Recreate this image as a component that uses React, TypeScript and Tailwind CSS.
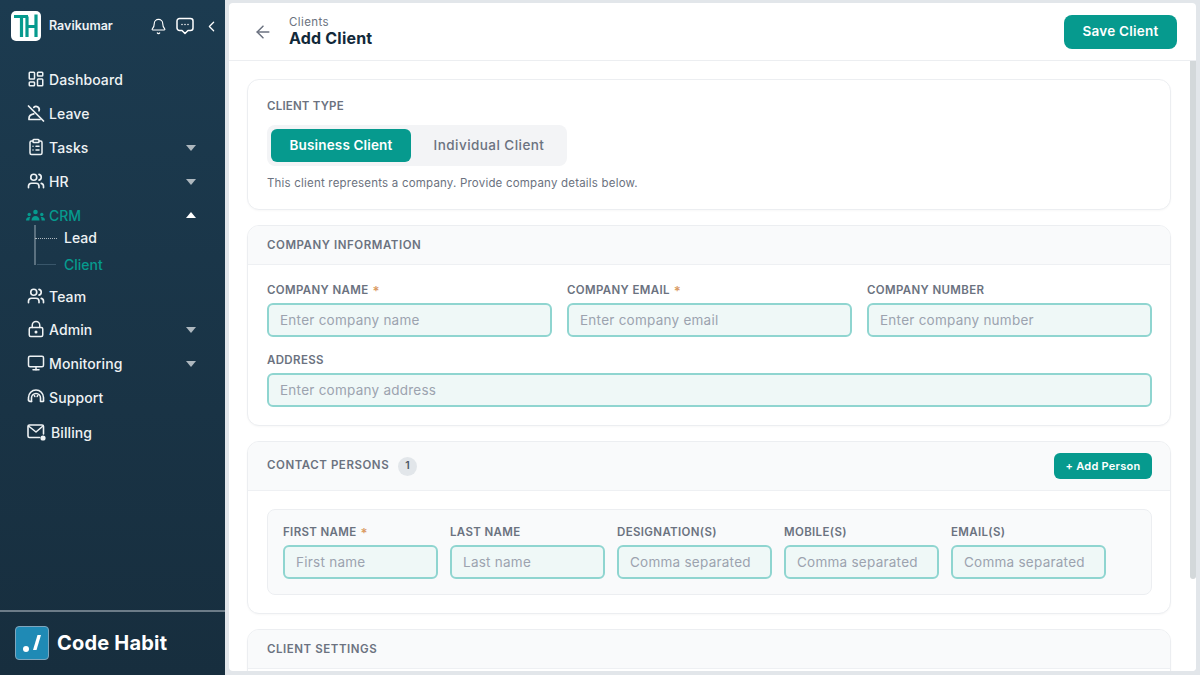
import React from 'react';
import { ArrowLeft, Bell, ChevronLeft, ClipboardList, LayoutDashboard, LockKeyhole, Monitor, Users } from 'lucide-react';

const LeaveIcon = () => (
  <svg width="18" height="18" viewBox="0 0 18 18" fill="none" stroke="currentColor" strokeWidth="1.700" strokeLinecap="round" strokeLinejoin="round">
    <path d="M1.500 2 16.500 17" />
    <path d="M6.800 3.300A3.200 3.200 0 0 1 12 6.800" />
    <path d="M6.800 9.800c-2.800.5-4.800 2-4.800 4.500v1.200h11" />
  </svg>
);

const CrmIcon = () => (
  <svg width="19" height="12" viewBox="0 0 19 12" fill="currentColor">
    <circle cx="9.500" cy="3" r="2.300" />
    <path d="M5.500 11.500c0-3 1.800-4.500 4-4.500s4 1.500 4 4.500z" />
    <circle cx="3.200" cy="5.500" r="1.700" />
    <circle cx="15.800" cy="5.500" r="1.700" />
    <path d="M0 11.500c0-2.500 1.400-3.800 4.300-3.500-.6 1-.9 2.100-.9 3.500zM19 11.500c0-2.500-1.400-3.800-4.300-3.500.6 1 .9 2.100.9 3.500z" />
  </svg>
);

const SupportIcon = () => (
  <svg width="18" height="18" viewBox="0 0 18 18" fill="none" stroke="currentColor" strokeWidth="1.600" strokeLinecap="round" strokeLinejoin="round">
    <path d="M1.500 12V9.500a7.500 7.500 0 0 1 15 0V13" />
    <path d="M4.500 13.500V10a4.500 4.500 0 0 1 9 0v3.500h2.500a1 1 0 0 0 .5-.5" />
    <path d="M1.500 12c0 1 .9 1.500 3 1.500" />
    <path d="M7.300 7.500 7.800 8.500M10.700 7.500 10.200 8.500" />
  </svg>
);

const BillingIcon = () => (
  <svg width="20" height="17" viewBox="0 0 20 17" fill="none" stroke="currentColor" strokeWidth="1.600" strokeLinecap="round" strokeLinejoin="round">
    <path d="M12.500 13.500H2.500A1.500 1.500 0 0 1 1 12V2.500A1.500 1.500 0 0 1 2.500 1h12.500A1.500 1.500 0 0 1 16.500 2.500V10" />
    <path d="m1.500 2 7.500 6 7-6" />
    <circle cx="16" cy="14" r="1.800" fill="currentColor" />
  </svg>
);

const ChatIcon = () => (
  <svg width="18" height="18" viewBox="0 0 18 18" fill="none" stroke="currentColor" strokeWidth="1.500" strokeLinecap="round" strokeLinejoin="round">
    <path d="M3.500 1.500h11a2.500 2.500 0 0 1 2.500 2.500v7a2.500 2.500 0 0 1-2.500 2.500H12L9 16.500 6 13.500H3.500A2.500 2.500 0 0 1 1 11V4a2.500 2.500 0 0 1 2.500-2.500z" />
    <path d="M6 7.500h.01M9 7.500h.01M12 7.500h.01" />
  </svg>
);

const Caret = ({ up = false }: { up?: boolean }) => (
  <svg width="10" height="6" viewBox="0 0 10 6" className={up ? 'text-white' : 'mt-[2px] text-[#aeb8bf]'} fill="currentColor">
    <path d={up ? 'M5 0 10 6H0z' : 'M0 0h10L5 6z'} />
  </svg>
);

const NavItem = ({
  icon,
  label,
  caret,
  className = 'h-[34px]',
  labelClassName = ''
}: {
  icon: React.ReactNode;
  label: string;
  caret?: boolean;
  className?: string;
  labelClassName?: string;
}) => (
  <div className={`flex items-center pr-[29px] pl-[27px] ${className}`}>
    <span className="flex w-[22px] shrink-0 items-center">{icon}</span>
    <span className={`flex-1 text-[14px] font-medium tracking-[0.1px] text-[#eef2f4] ${labelClassName}`}>{label}</span>
    {caret && <Caret />}
  </div>
);

const Sidebar = () => (
  <aside className="flex h-full w-[225px] shrink-0 flex-col bg-gradient-to-b from-[#1c3b50] to-[#172e3e]">
    <div className="flex h-[62px] shrink-0 items-center pb-[10px] pl-[11px]">
      <div className="flex h-[30px] w-[30px] items-center justify-center rounded-[5px] bg-white">
        <svg width="30" height="30" viewBox="0 0 30 30" fill="none" stroke="#069a8e" strokeWidth="3.200">
          <path d="M3 5.500h14M10.500 5.500V26M16 5.500V26M16 15.500h9M25 3.500V26" />
        </svg>
      </div>
      <span className="ml-[8px] text-[12.500px] font-semibold text-[#eef2f4]">Ravikumar</span>
      <div className="ml-[37px] flex items-center gap-[9px] text-white">
        <Bell size={17} strokeWidth={1.600} />
        <ChatIcon />
        <ChevronLeft size={17} strokeWidth={1.800} />
      </div>
    </div>
    <nav className="flex flex-1 flex-col text-[#eef2f4]">
      <NavItem icon={<LayoutDashboard size={18} strokeWidth={2} />} label="Dashboard" />
      <NavItem icon={<LeaveIcon />} label="Leave" />
      <NavItem icon={<ClipboardList size={18} strokeWidth={2} />} label="Tasks" caret />
      <NavItem icon={<Users size={18} strokeWidth={2.200} />} label="HR" caret />
      <div className="flex h-[34px] items-center pr-[29px] pl-[26px]">
        <span className="flex w-[23px] shrink-0 items-center text-[#069a8e]">
          <CrmIcon />
        </span>
        <span className="flex-1 text-[14px] font-medium text-[#069a8e]">CRM</span>
        <Caret up />
      </div>
      <div className="relative -mt-[9px] h-[52px] pl-[64px]">
        <span className="absolute top-[2px] left-[34px] h-[40px] w-[2px] bg-[#5b7180]" />
        <span className="absolute top-[15px] left-[35px] h-px w-[22px] border-t border-dotted border-[#aeb8bf]" />
        <span className="absolute top-[41px] left-[37px] h-px w-[19px] bg-[#39566a]" />
        <div className="flex h-[27px] items-center pt-[2px] text-[14px] font-medium text-[#eef2f4]">Lead</div>
        <div className="flex h-[27px] items-center pt-[2px] text-[14px] font-medium text-[#069a8e]">Client</div>
      </div>
      <div className="h-[4px]" />
      <NavItem icon={<Users size={18} strokeWidth={2.200} />} label="Team" className="h-[33px] pt-[1px]" />
      <NavItem icon={<LockKeyhole size={18} strokeWidth={2} />} label="Admin" caret />
      <NavItem icon={<Monitor size={18} strokeWidth={2} />} label="Monitoring" caret />
      <NavItem icon={<SupportIcon />} label="Support" />
      <NavItem icon={<BillingIcon />} label="Billing" className="h-[34px] pt-[2px]" labelClassName="pl-[2px]" />
    </nav>
    <div className="flex h-[65px] shrink-0 items-center border-t-2 border-[#6c7c88] pb-[2px] pl-[15px]">
      <div className="flex h-[34px] w-[34px] items-center justify-center rounded-[4px] border border-[#7fa6bd] bg-[#1f8ab5]">
        <svg width="22" height="20" viewBox="0 0 22 20" fill="white">
          <circle cx="5" cy="16" r="3" />
          <path d="M12 17 16.500 2h3.500l-4.500 15z" />
        </svg>
      </div>
      <span className="ml-[8px] text-[20px] font-bold tracking-[0.2px] text-white">Code Habit</span>
    </div>
  </aside>
);

const Req = () => <span className="ml-[4px] text-[13px] leading-none text-[#d99a62]">*</span>;

const Field = ({
  label,
  placeholder,
  required,
  className = ''
}: {
  label: string;
  placeholder: string;
  required?: boolean;
  className?: string;
}) => (
  <div className={className}>
    <div className="mb-[4px] flex h-[16px] items-center text-[11.500px] font-semibold tracking-[0.35px] text-[#6b7280]">
      {label}
      {required && <Req />}
    </div>
    <div className="flex h-[34px] items-center rounded-[6px] border-2 border-[#8fd5d0] bg-[#eff8f7] pl-[11px] text-[13.500px] tracking-[0.25px] whitespace-nowrap text-[#9ca3af]">
      {placeholder}
    </div>
  </div>
);

const SectionHead = ({ children, className = 'h-[39px] pt-[2px]' }: { children: React.ReactNode; className?: string }) => (
  <div className={`flex items-center border-b border-[#eef0f3] bg-[#f9fafb] px-[19px] text-[11.500px] font-semibold tracking-[0.55px] text-[#6b7280] ${className}`}>
    {children}
  </div>
);

const Card = ({ children, className = '' }: { children: React.ReactNode; className?: string }) => (
  <section className={`shrink-0 overflow-hidden rounded-[12px] border border-[#eceef1] bg-white shadow-[0_1px_2px_rgba(0,0,0,0.03)] ${className}`}>
    {children}
  </section>
);

const App = () => (
  <div className="flex h-[675px] w-[1200px] overflow-hidden bg-[#e2e6ea] font-['Inter',sans-serif]">
    <Sidebar />
    <main className="mt-[3px] mr-[4px] mb-[4px] ml-[4px] flex min-w-0 flex-1 flex-col overflow-hidden rounded-[4px] bg-white">
      <header className="flex h-[58px] shrink-0 items-center border-b border-[#eceef1] pr-[19px] pl-[24px]">
        <ArrowLeft size={20} strokeWidth={1.800} className="text-[#6b7280]" />
        <div className="ml-[16px] flex-1">
          <div className="text-[11.500px] leading-[14px] tracking-[0.4px] text-[#6b7280]">Clients</div>
          <div className="mb-[1px] text-[16px] leading-[19px] font-bold tracking-[0.2px] text-[#12293a]">Add Client</div>
        </div>
        <button className="h-[34px] w-[113px] rounded-[8px] bg-[#069a8e] text-[13.500px] font-semibold tracking-[0.25px] text-white">
          Save Client
        </button>
      </header>
      <div className="flex min-h-0 flex-1">
        <div className="flex min-w-0 flex-1 flex-col gap-[15px] overflow-hidden pt-[18px] pr-[19px] pl-[18px]">
          <Card className="h-[131px] px-[19px] pt-[18px]">
            <div className="text-[11.500px] leading-[16px] font-semibold tracking-[0.2px] text-[#6b7280]">CLIENT TYPE</div>
            <div className="mt-[11px] flex h-[41px] w-[300px] items-center rounded-[8px] bg-[#f3f4f6] pl-[4px]">
              <div className="flex h-[33px] w-[140px] items-center justify-center rounded-[6px] bg-[#069a8e] text-[13.500px] font-semibold tracking-[0.15px] text-white">
                Business Client
              </div>
              <div className="w-[156px] text-center text-[13.500px] font-medium tracking-[0.45px] text-[#6b7280]">Individual Client</div>
            </div>
            <p className="mt-[9px] text-[11.500px] leading-[16px] tracking-[0.2px] text-[#6b7280]">
              This client represents a company. Provide company details below.
            </p>
          </Card>
          <Card className="h-[201px]">
            <SectionHead>COMPANY INFORMATION</SectionHead>
            <div className="grid grid-cols-[285px_285px_285px] gap-x-[15px] gap-y-[16px] pt-[18px] pl-[19px]">
              <Field label="COMPANY NAME" placeholder="Enter company name" required />
              <Field label="COMPANY EMAIL" placeholder="Enter company email" required />
              <Field label="COMPANY NUMBER" placeholder="Enter company number" />
              <Field label="ADDRESS" placeholder="Enter company address" className="col-span-3" />
            </div>
          </Card>
          <Card className="h-[173px]">
            <SectionHead className="h-[49px] justify-between pr-[18px]">
              <span className="flex items-center">
                CONTACT PERSONS
                <span className="ml-[9px] flex h-[19px] w-[19px] items-center justify-center rounded-full bg-[#e2e6ea] text-[10.500px] text-[#4b5563]">
                  1
                </span>
              </span>
              <button className="h-[26px] w-[98px] rounded-[6px] bg-[#069a8e] text-[11px] font-semibold tracking-[0.25px] text-white">
                + Add Person
              </button>
            </SectionHead>
            <div className="pt-[18px] pr-[18px] pl-[19px]">
              <div className="grid h-[86px] grid-cols-[155px_155px_155px_155px_155px] gap-x-[12px] rounded-[8px] border border-[#eceef1] bg-[#f9fafb] pt-[15px] pl-[15px]">
                <Field label="FIRST NAME" placeholder="First name" required />
                <Field label="LAST NAME" placeholder="Last name" />
                <Field label="DESIGNATION(S)" placeholder="Comma separated" />
                <Field label="MOBILE(S)" placeholder="Comma separated" />
                <Field label="EMAIL(S)" placeholder="Comma separated" />
              </div>
            </div>
          </Card>
          <Card className="h-[120px]">
            <SectionHead>CLIENT SETTINGS</SectionHead>
          </Card>
        </div>
        <div className="w-[6px] shrink-0 bg-white">
          <div className="h-[518px] rounded-b-[3px] bg-[#d3d8da]" />
        </div>
      </div>
    </main>
  </div>
);

export default App;
